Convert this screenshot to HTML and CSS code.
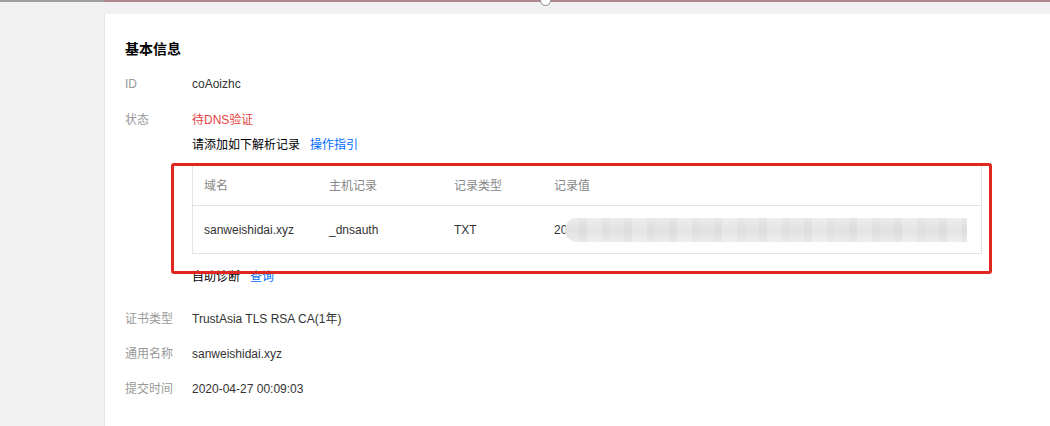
FILE: index.html
```html
<!DOCTYPE html>
<html lang="zh">
<head>
<meta charset="utf-8">
<link rel="stylesheet" href="styles.css">
</head>
<body>
<div class="topline"><span class="line-left"></span><span class="line-right"></span><span class="knob"></span></div>
<div class="page">
  <div class="card">
    <h3 class="title">基本信息</h3>
    <div class="row">
      <div class="label">ID</div>
      <div class="value">coAoizhc</div>
    </div>
    <div class="row">
      <div class="label">状态</div>
      <div class="value">
        <div class="status">待DNS验证</div>
        <div class="hint">请添加如下解析记录<a class="link">操作指引</a></div>
        <div class="table">
          <div class="tr th">
            <div class="td">域名</div>
            <div class="td">主机记录</div>
            <div class="td">记录类型</div>
            <div class="td">记录值</div>
          </div>
          <div class="tr">
            <div class="td">sanweishidai.xyz</div>
            <div class="td">_dnsauth</div>
            <div class="td">TXT</div>
            <div class="td">20<span class="blur"></span></div>
          </div>
        </div>
        <div class="diag">自助诊断<a class="link">查询</a></div>
      </div>
    </div>
    <div class="row gap-top tight">
      <div class="label">证书类型</div>
      <div class="value">TrustAsia TLS RSA CA(1年)</div>
    </div>
    <div class="row tight">
      <div class="label">通用名称</div>
      <div class="value">sanweishidai.xyz</div>
    </div>
    <div class="row">
      <div class="label">提交时间</div>
      <div class="value">2020-04-27 00:09:03</div>
    </div>
    <div class="redbox"></div>
  </div>
</div>
</body>
</html>
```
FILE: styles.css
```css
* { box-sizing: border-box; }
html, body { margin: 0; padding: 0; }
body {
  width: 1050px;
  height: 426px;
  overflow: hidden;
  background: #f1f1f1;
  font-family: "Liberation Sans", Arial, "Noto Sans CJK SC", sans-serif;
  font-size: 12px;
  color: #333;
}
.topline {
  position: relative;
  display: flex;
  height: 2px;
}
.line-left { width: 104px; background: #9e9e9e; }
.line-right { flex: 1; background: #b08890; }
.knob {
  position: absolute;
  left: 540px;
  top: -5px;
  width: 11px;
  height: 11px;
  border-radius: 50%;
  background: #fff;
  border: 1px solid #888;
}
.page {
  padding: 12px 0 0 104px;
}
.card {
  position: relative;
  background: #fff;
  height: 412px;
  padding: 24px 20px 0 20px;
  border-left: 1px solid #e8e8e8;
}
.title {
  margin: 0 0 16px 0;
  font-size: 14px;
  line-height: 20px;
  font-weight: bold;
  color: #000;
  font-family: "Noto Sans CJK SC", sans-serif;
}
.row {
  display: flex;
  line-height: 20px;
  margin-bottom: 16px;
}
.gap-top { margin-top: 23px; }
.tight { margin-bottom: 15px; }
.label {
  width: 67px;
  flex: none;
  color: #999;
  font-family: "Liberation Sans", "Noto Sans CJK SC", sans-serif;
}
.value { color: #333; }
.status { color: #e54545; font-family: "Liberation Sans", "Noto Sans CJK SC", sans-serif; }
.hint, .diag { margin-top: 4px; color: #000; font-family: "Noto Sans CJK SC", sans-serif; }
.link { color: #006eff; margin-left: 10px; }
.table {
  margin-top: 9px;
  width: 790px;
  border: 1px solid #e5e5e5;
}
.tr {
  display: grid;
  grid-template-columns: 125px 125px 100px 1fr;
  height: 47px;
  align-items: center;
}
.th {
  height: 42px;
  color: #888;
  border-bottom: 1px solid #e5e5e5;
  font-family: "Noto Sans CJK SC", sans-serif;
}
.td {
  padding-left: 11px;
  display: flex;
  align-items: center;
}
.blur {
  display: inline-block;
  width: 402px;
  height: 24px;
  margin-left: -2px;
  border-radius: 12px 0 0 12px;
  background:
    linear-gradient(180deg, rgba(255,255,255,0.25), rgba(0,0,0,0.02) 50%, rgba(255,255,255,0.25)),
    repeating-linear-gradient(90deg, #e6e6e6 0 14px, #e0e0e0 14px 22px, #e9e9e9 22px 37px, #e2e2e2 37px 45px);
}
.diag { margin-top: 12px; }
.redbox {
  position: absolute;
  left: 66px;
  top: 149px;
  width: 821px;
  height: 111px;
  border: 3px solid #e0271f;
  border-radius: 3px;
}
```
